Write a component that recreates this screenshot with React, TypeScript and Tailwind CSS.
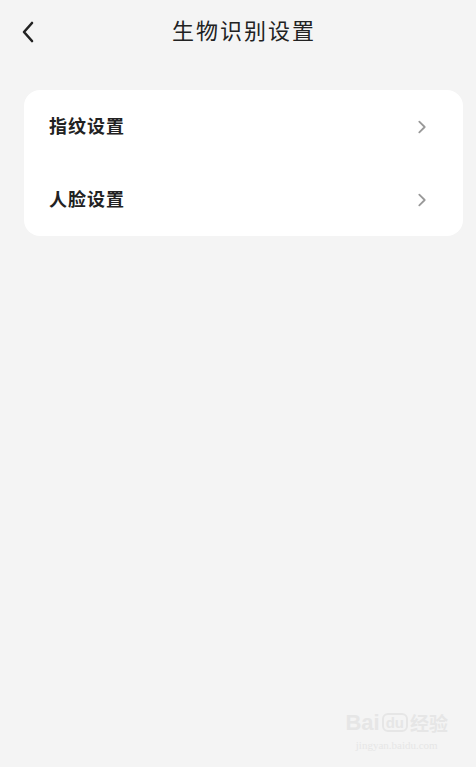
import React from "react";

function Chevron({ className }: { className?: string }) {
  return (
    <svg viewBox="0 0 12 20" className={className} fill="none" stroke="currentColor" strokeWidth="2" strokeLinecap="round" strokeLinejoin="round">
      <path d="M3 4 L9 10 L3 16" />
    </svg>
  );
}

export default function App() {
  const font = { fontFamily: '"Noto Sans CJK SC", "Noto Sans", sans-serif' };
  return (
    <div className="relative w-[476px] h-[767px] bg-[#f4f4f4] overflow-hidden" style={font}>
      <div className="h-[64px] flex items-center relative">
        <svg viewBox="0 0 16 24" className="absolute left-[19px] top-[20px] w-[18px] h-[24px] text-[#222]" fill="none" stroke="currentColor" strokeWidth="2.6" strokeLinecap="round" strokeLinejoin="round">
          <path d="M12 3 L4 12 L12 21" />
        </svg>
        <div className="flex-1 text-center text-[22px] tracking-[2px] text-[#222] pl-[12px] -mt-[6px]">生物识别设置</div>
      </div>
      <div className="ml-[24px] mr-[13px] mt-[26px] rounded-[16px] bg-white flex flex-col">
        <div className="h-[73px] flex items-center pl-[25px] pr-[35px]">
          <span className="flex-1 text-[18px] font-bold tracking-[1px] text-[#222] -mt-[2px]">指纹设置</span>
          <Chevron className="w-[12px] h-[18px] text-[#999]" />
        </div>
        <div className="h-[73px] flex items-center pl-[25px] pr-[35px]">
          <span className="flex-1 text-[18px] font-bold tracking-[1px] text-[#222] -mt-[2px]">人脸设置</span>
          <Chevron className="w-[12px] h-[18px] text-[#999]" />
        </div>
      </div>
      <div className="absolute right-[28px] bottom-[14px] flex flex-col items-center text-[#e6e6e6]">
        <div className="flex items-center gap-[2px] text-[22px] font-bold leading-none">
          <span style={{ fontFamily: '"Liberation Sans", sans-serif' }}>Bai</span>
          <span className="rounded-[6px] border-2 border-[#e6e6e6] px-[2px] text-[15px]" style={{ fontFamily: '"Liberation Sans", sans-serif' }}>du</span>
          <span className="text-[19px]">经验</span>
        </div>
        <div className="text-[11px] mt-[3px]" style={{ fontFamily: '"Liberation Serif", serif' }}>jingyan.baidu.com</div>
      </div>
    </div>
  );
}
